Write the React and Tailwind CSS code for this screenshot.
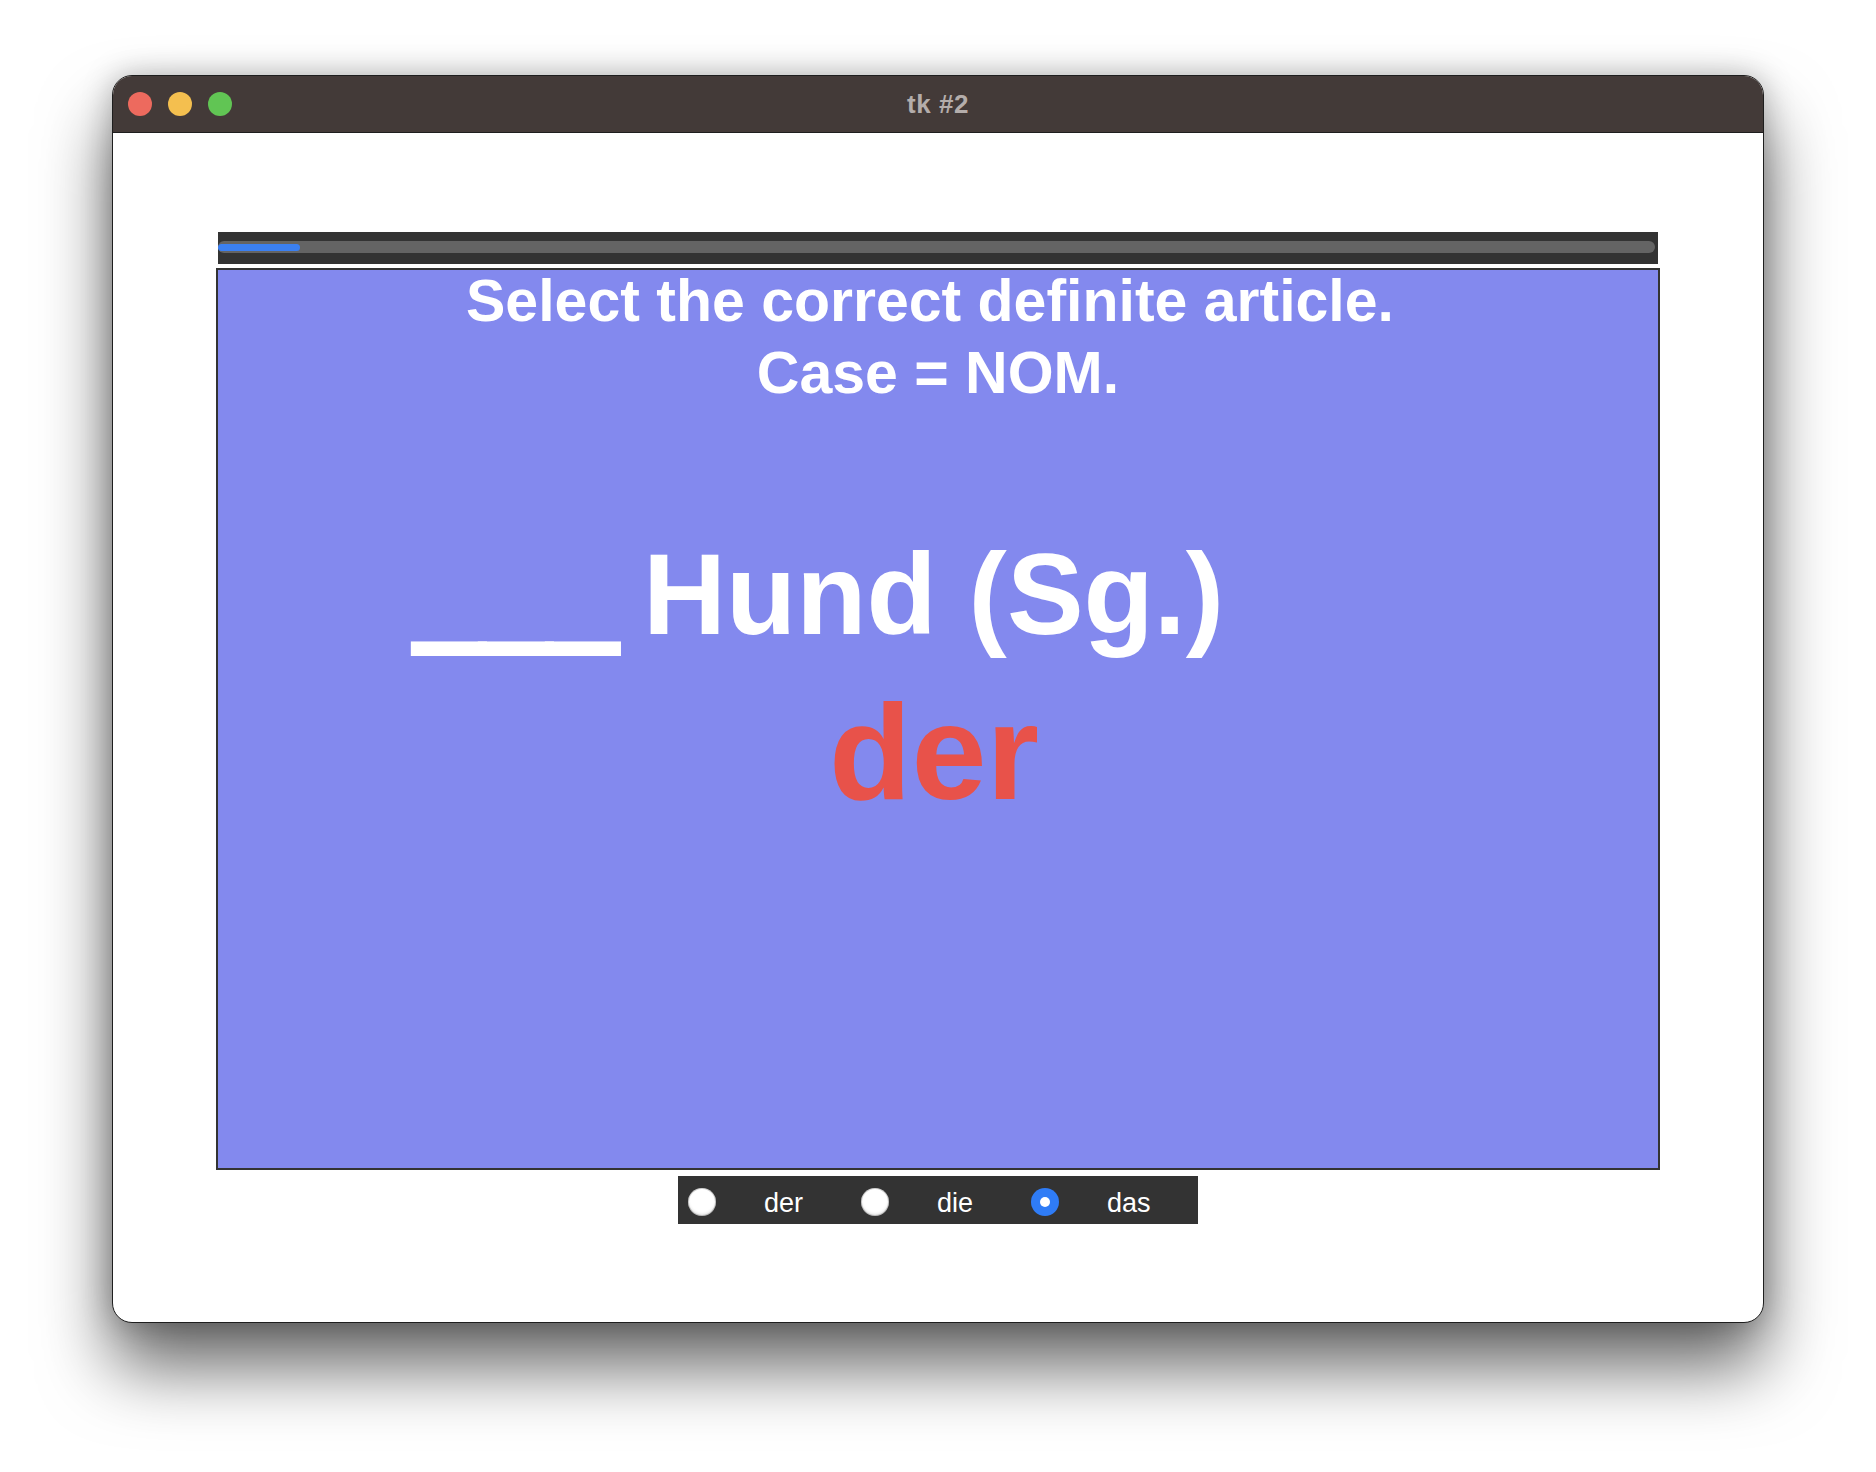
import React, { useState } from "react";

const options = ["der", "die", "das"];

const Radio = ({ checked, onClick }) => (
  <button
    onClick={onClick}
    className={
      checked
        ? "mt-[4px] w-[28px] h-[28px] rounded-full bg-[#2f7cf6] flex items-center justify-center shrink-0"
        : "mt-[4px] w-[28px] h-[28px] rounded-full bg-white shadow-[inset_0_0_0_1px_rgba(0,0,0,0.18),inset_0_-2px_3px_rgba(0,0,0,0.12)] shrink-0"
    }
  >
    {checked && <span className="block w-[10px] h-[10px] rounded-full bg-white" />}
  </button>
);

const App = () => {
  const [choice, setChoice] = useState("das");

  return (
    <div
      className="w-[1876px] h-[1472px] bg-white pt-[75px] pl-[112px]"
      style={{ fontFamily: '"Liberation Sans", Arial, Helvetica, sans-serif' }}
    >
      <div className="w-[1652px] h-[1248px] rounded-[20px] border border-[#1e1e1e] bg-white overflow-hidden flex flex-col shadow-[0_44px_70px_rgba(0,0,0,0.6),0_0_30px_rgba(0,0,0,0.25)]">
        {/* title bar */}
        <div className="h-[57px] shrink-0 bg-[#433a38] border-b border-[#1e1e1e] grid grid-cols-[1fr_auto_1fr] items-center">
          <div className="flex items-center gap-[16px] pl-[15px]">
            <span className="w-[24px] h-[24px] rounded-full bg-[#ed6a5e]" />
            <span className="w-[24px] h-[24px] rounded-full bg-[#f4bf4f]" />
            <span className="w-[24px] h-[24px] rounded-full bg-[#61c554]" />
          </div>
          <div className="text-[26px] font-bold text-[#b4adab] tracking-[0.5px]">tk #2</div>
          <div />
        </div>

        <div className="pl-[103px] pt-[99px]">
          <div className="w-[1444px]">
            {/* progress */}
            <div className="mx-[2px] h-[32px] bg-[#333333] flex items-center pr-[3px]">
              <div className="flex-1 h-[12px] -mt-[2px] rounded-full bg-[#646464] flex items-center">
                <div className="w-[82px] h-[7px] rounded-full bg-[#3b80f2]" />
              </div>
            </div>

            {/* card */}
            <div className="mt-[4px] h-[902px] border-2 border-[#333333] bg-[#8389ee] flex flex-col text-white font-bold">
              <div className="-mt-[5px] text-[59px] leading-[72px] text-center">
                <div className="pr-[16px]">Select the correct definite article.</div>
                <div>Case = NOM.</div>
              </div>

              <div className="mt-[128px] pl-[199px] flex items-baseline text-[115px] leading-[115px]">
                <span className="tracking-[3px] -mr-[3px] translate-y-[3px] [-webkit-text-stroke:10px_white]">___</span>
                <span className="ml-[28px]">Hund (Sg.)</span>
              </div>

              <div className="mt-[33px] pr-[8px] text-center text-[135px] leading-[135px] text-[#e8524a]">
                der
              </div>
            </div>

            {/* options */}
            <div className="mt-[6px] ml-[462px] w-[520px] h-[48px] bg-[#333333] flex items-center pl-[10px]">
              {options.map((o, i) => (
                <div key={o} className="flex items-center">
                  <Radio checked={choice === o} onClick={() => setChoice(o)} />
                  <span
                    className={
                      i < options.length - 1
                        ? "ml-[48px] mr-[58px] mt-[6px] text-[27px] text-white"
                        : "ml-[48px] mt-[6px] text-[27px] text-white"
                    }
                  >
                    {o}
                  </span>
                </div>
              ))}
            </div>
          </div>
        </div>
      </div>
    </div>
  );
};

export default App;
